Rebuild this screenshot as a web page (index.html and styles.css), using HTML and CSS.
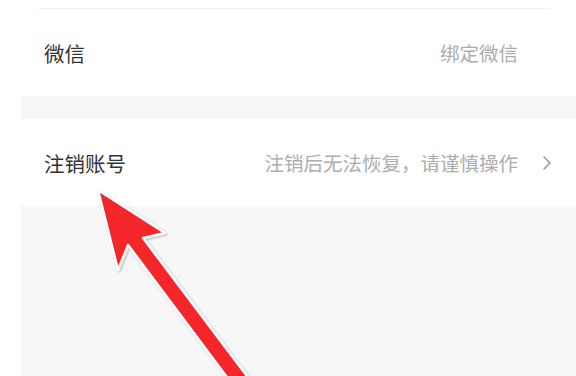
FILE: index.html
```html
<!DOCTYPE html>
<html lang="zh-CN">
<head>
    <meta charset="UTF-8">
    <title>账号设置</title>
    <link rel="stylesheet" href="styles.css">
</head>
<body>
    <div class="page">
        <div class="group">
            <div class="divider"></div>
            <div class="row">
                <span class="row-title">微信</span>
                <span class="row-value">绑定微信</span>
                <span class="chevron chevron-hidden"></span>
            </div>
        </div>

        <div class="group">
            <div class="row">
                <span class="row-title">注销账号</span>
                <span class="row-value">注销后无法恢复，请谨慎操作</span>
                <span class="chevron">
                    <svg width="10" height="16" viewBox="0 0 10 16">
                        <path d="M2 2 L8 8 L2 14" fill="none" stroke="#9a9a9a" stroke-width="1.6" stroke-linecap="round" stroke-linejoin="round"/>
                    </svg>
                </span>
            </div>
        </div>
    </div>

    <!-- annotation arrow drawn over the screenshot -->
    <svg class="annotation" width="576" height="376" viewBox="0 0 576 376">
        <defs>
            <filter id="shadow" x="-20%" y="-20%" width="140%" height="140%">
                <feDropShadow dx="1" dy="1" stdDeviation="1.2" flood-color="#000" flood-opacity="0.3"/>
            </filter>
        </defs>
        <polygon points="98,190 165,233 143,238 259,392 238,392 128,245 118,270"
                 fill="#f5262a" stroke="#fff" stroke-width="2.5" stroke-linejoin="round" filter="url(#shadow)"/>
    </svg>
</body>
</html>
```

FILE: styles.css
```css
body {
    margin: 0;
    background: #fff;
    font-family: "Noto Sans CJK SC", "Noto Sans", sans-serif;
    overflow: hidden;
}

.page {
    margin-left: 21px;
    min-height: 376px;
    background: #f7f7f7;
}

.group {
    background: #fff;
    margin-bottom: 23px;
}

.divider {
    height: 1px;
    margin: 0 26px 0 17px;
    border-top: 8px solid #fff;
    background: #f2f2f2;
}

.row {
    display: flex;
    align-items: center;
    height: 87px;
    padding: 0 24px 0 23px;
}

.row-title {
    font-size: 20.5px;
    color: #333;
    flex: 1;
}

.row-value {
    font-size: 19.5px;
    color: #adadad;
}

.chevron {
    width: 10px;
    height: 16px;
    margin-left: 24px;
    display: flex;
}

.chevron-hidden {
    visibility: hidden;
}

.annotation {
    position: absolute;
    left: 0;
    top: 0;
}
```
